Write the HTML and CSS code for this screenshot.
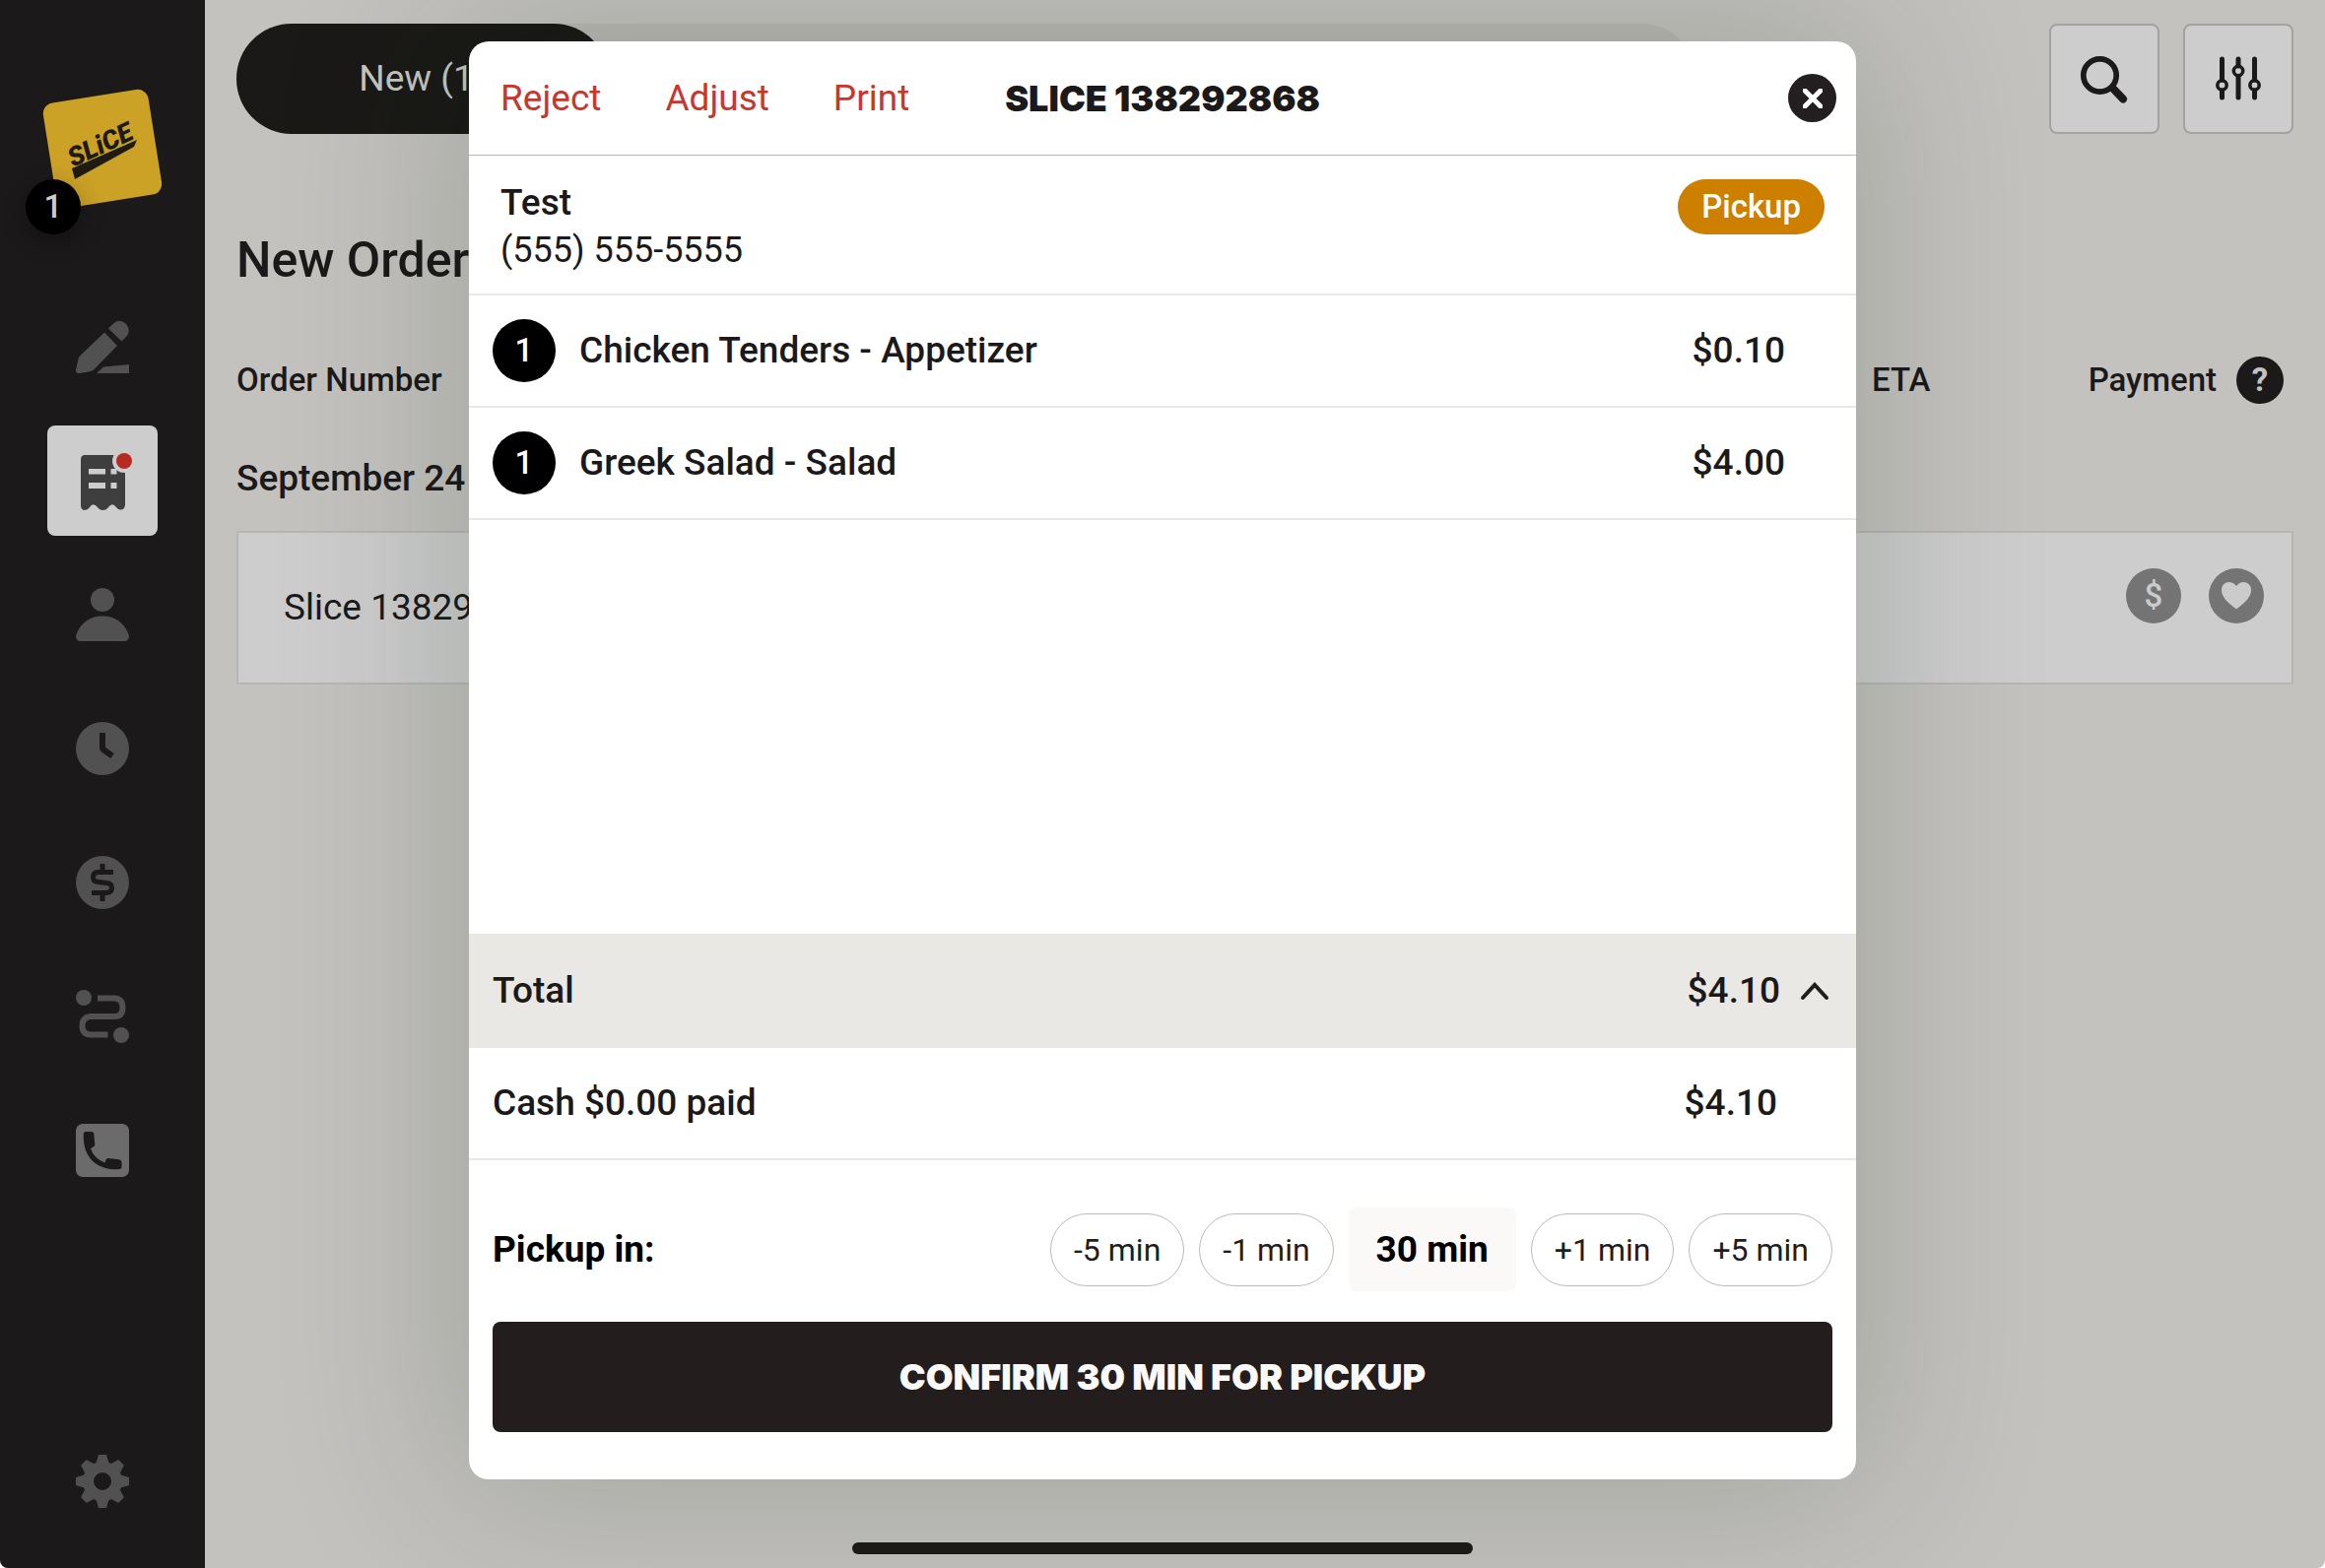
FILE: index.html
```html
<!DOCTYPE html>
<html lang="en">
<head>
    <meta charset="UTF-8">
    <meta name="viewport" content="width=device-width, initial-scale=1.0">
    <title>Slice Orders</title>
    <link rel="stylesheet" href="styles.css">
</head>
<body>
    <div class="app">
        <aside class="sidebar">
            <div class="brand">
                <svg class="logo" viewBox="0 0 124 124" role="img" aria-label="Slice">
                    <rect x="8" y="8" width="108" height="108" rx="11" fill="#cba126" transform="rotate(-9 62 62)"/>
                    <text class="logo-text" x="32" y="81" transform="rotate(-25 32 81)">SLiCE</text>
                    <polygon points="31,82 97,53 94,60 34,93" fill="#1f1a12"/>
                </svg>
                <span class="brand-badge">1</span>
            </div>
            <nav class="nav">
                <button class="nav-item" aria-label="New order">
                    <svg viewBox="0 0 54 54">
                        <path d="M29 12.500 42 26 18 50.500Q16 52 13 52.500L3.500 54Q0 54.500 0 50.500L2.500 39.500Q3 37.500 5 35.500Z"/>
                        <path d="M33 8.500 37.500 4Q44-2 50.500 3.500 57 10.500 51 17L46.500 21.500Z"/>
                        <path d="M28 47.500 54 45V54H21Z"/>
                    </svg>
                </button>
                <button class="nav-item active" aria-label="Orders">
                    <svg viewBox="0 0 54 60">
                        <path fill="#3e3e3e" d="M9 4H45Q50 4 50 9V55Q49 60 45 59.500 43 59.500 41 57 37 51.500 33 57 31 60 27.500 60 24 60 22 57 17.500 51.500 14 57 12 60 8 60 5 59 5 55V9Q5 4 9 4Z"/>
                        <path fill="#cdcdcd" d="M13 18H30V23.500H13ZM35.500 18H41.500V23.500H35.500ZM13 32H30V38H13ZM35.500 32H41.500V38H35.500Z"/>
                        <circle cx="49" cy="10" r="12" fill="#cdcdcd"/>
                        <circle cx="49" cy="10" r="8" fill="#b62a21"/>
                    </svg>
                </button>
                <button class="nav-item" aria-label="Customers">
                    <svg viewBox="0 0 54 54">
                        <circle cx="27" cy="12" r="12"/>
                        <path d="M5 54Q0 54 0 48.500C4 36 14 28.500 27 28.500S50 36 54 48.500Q54 54 49 54Z"/>
                    </svg>
                </button>
                <button class="nav-item" aria-label="Hours">
                    <svg viewBox="0 0 54 54">
                        <circle cx="27" cy="27" r="27"/>
                        <path class="cut" stroke-width="6" d="M27 11V26Q27 27.500 28.500 28.500L37 34.500"/>
                    </svg>
                </button>
                <button class="nav-item" aria-label="Payments">
                    <svg viewBox="0 0 54 54">
                        <circle cx="27" cy="27" r="27"/>
                        <path class="cut" stroke-width="5" d="M38 16.500H23Q17.500 16.500 17.500 21.500T23 26.500L31 27.500Q36.500 28 36.500 32.500T31 37.500H16M27 8V16M27 38V46"/>
                    </svg>
                </button>
                <button class="nav-item" aria-label="Deliveries">
                    <svg viewBox="0 0 54 54">
                        <circle cx="8" cy="8" r="8"/>
                        <circle cx="46" cy="46" r="8"/>
                        <path class="line" stroke-width="6" d="M22 8.500H39.500Q47.500 9 47.500 18T39.500 27H14.500Q6.500 28 6.500 36.500T14.500 45.500H32.500"/>
                    </svg>
                </button>
                <button class="nav-item" aria-label="Calls">
                    <svg viewBox="0 0 54 54">
                        <rect width="54" height="54" rx="7" fill="#6b6b6b"/>
                        <path fill="#1b191a" d="M10 8H16Q18 8 18.300 10L19.300 21Q19.300 22.500 18 23.200L15 25Q18 35 29.500 39.500L30.500 36.500Q31 34.800 33 35L44 36.300Q46.500 36.800 46.500 39V44Q46.500 46 44 46.200C21 47.500 7 34 7.800 11Q7.800 8 10 8Z"/>
                    </svg>
                </button>
            </nav>
            <button class="nav-item" aria-label="Settings">
                <svg viewBox="-27 -27 54 54">
                    <circle r="14.500" fill="none" stroke="#515151" stroke-width="11"/>
                    <path d="M-7-17-4-27H4L7-17ZM-7 17-4 27H4L7 17ZM-17-7-27-4V4L-17 7ZM17-7 27-4V4L17 7Z"/>
                    <path transform="rotate(45)" d="M-7-17-4-27H4L7-17ZM-7 17-4 27H4L7 17ZM-17-7-27-4V4L-17 7ZM17-7 27-4V4L17 7Z"/>
                </svg>
            </button>
        </aside>

        <main class="main">
            <header class="topbar">
                <div class="tabs">
                    <button class="tab">New (1)</button>
                </div>
                <div class="tools">
                    <button class="tool" aria-label="Search">
                        <svg width="50" height="50" viewBox="0 0 50 50" fill="none" stroke="#1b191a" stroke-linecap="round">
                            <circle cx="20.500" cy="21.500" r="16.700" stroke-width="5.700"/>
                            <path d="M34 35 44 45.500" stroke-width="8"/>
                        </svg>
                    </button>
                    <button class="tool" aria-label="Filters">
                        <svg width="50" height="50" viewBox="0 0 50 50" fill="none" stroke="#1b191a" stroke-width="5" stroke-linecap="round">
                            <path d="M8.500 5V26M8.500 37V44M25 5V12M25 23V44M41.500 5V26M41.500 37V44"/>
                            <g stroke-width="3.500">
                                <circle cx="8.500" cy="31.500" r="4.700"/>
                                <circle cx="25" cy="17" r="4.700"/>
                                <circle cx="41.500" cy="31.500" r="4.700"/>
                            </g>
                        </svg>
                    </button>
                </div>
            </header>

            <h1>New Orders</h1>
            <table class="orders">
                <thead>
                    <tr>
                        <th class="col-number">Order Number</th>
                        <th>ETA</th>
                        <th class="col-payment">
                            <span class="payment-head">Payment <button class="help" aria-label="Help">?</button></span>
                        </th>
                    </tr>
                </thead>
                <tbody>
                    <tr>
                        <th class="date" colspan="3">September 24</th>
                    </tr>
                    <tr class="order">
                        <td>Slice 138292868</td>
                        <td></td>
                        <td>
                            <span class="marks">
                                <span class="mark">$</span>
                                <span class="mark">
                                    <svg width="30" height="28" viewBox="0 0 30 28"><path fill="#cbcbcb" d="M15 27.500C5 20 0 14.500 0 8 0 0 10-3 15 4 20-3 30 0 30 8 30 14.500 25 20 15 27.500Z"/></svg>
                                </span>
                            </span>
                        </td>
                    </tr>
                </tbody>
            </table>
        </main>
    </div>

    <div class="overlay">
        <section class="modal" role="dialog" aria-labelledby="order-title">
            <header class="modal-header">
                <div class="actions">
                    <button>Reject</button>
                    <button>Adjust</button>
                    <button>Print</button>
                </div>
                <h2 id="order-title">SLICE 138292868</h2>
                <button class="close" aria-label="Close">
                    <svg width="20" height="20" viewBox="0 0 20 20"><path d="M2 2 18 18M18 2 2 18" stroke="#fff" stroke-width="5" stroke-linecap="round"/></svg>
                </button>
            </header>

            <div class="customer">
                <div>
                    <div class="customer-name">Test</div>
                    <div class="customer-phone">(555) 555-5555</div>
                </div>
                <span class="badge">Pickup</span>
            </div>

            <ul class="items">
                <li class="item"><span class="qty">1</span><span class="item-name">Chicken Tenders - Appetizer</span><span>$0.10</span></li>
                <li class="item"><span class="qty">1</span><span class="item-name">Greek Salad - Salad</span><span>$4.00</span></li>
            </ul>

            <button class="total">
                <span>Total</span>
                <span class="total-value">$4.10
                    <svg width="30" height="20" viewBox="0 0 30 20"><path d="M3 17 15 4 27 17" fill="none" stroke="#1f1d1e" stroke-width="4" stroke-linecap="round"/></svg>
                </span>
            </button>
            <div class="paid"><span>Cash $0.00 paid</span><span>$4.10</span></div>

            <footer class="modal-footer">
                <div class="pickup">
                    <span class="pickup-label">Pickup in:</span>
                    <button class="step">-5 min</button>
                    <button class="step">-1 min</button>
                    <output class="minutes">30 min</output>
                    <button class="step">+1 min</button>
                    <button class="step">+5 min</button>
                </div>
                <button class="confirm">CONFIRM 30 MIN FOR PICKUP</button>
            </footer>
        </section>
        <div class="home-bar"></div>
    </div>
</body>
</html>
```
FILE: styles.css
```css
* {
    box-sizing: border-box;
}
body {
    margin: 0;
    background-color: #fff;
    color: #1b191a;
    font-family: Roboto, "Liberation Sans", sans-serif;
    font-size: 37px;
    line-height: 48px;
}
button {
    padding: 0;
    border: 0;
    background: none;
    color: inherit;
    font: inherit;
}
h1, h2 {
    margin: 0;
}
.app {
    display: flex;
    min-height: 100vh;
    border-radius: 0 0 8px 8px;
    overflow: hidden;
    background-color: #c4c2bf;
}

/* sidebar */
.sidebar {
    position: relative;
    z-index: 2;
    display: flex;
    flex-direction: column;
    align-items: center;
    width: 208px;
    padding-bottom: 32px;
    background-color: #1b191a;
}
.brand {
    position: relative;
    width: 124px;
    height: 296px;
    padding-top: 89px;
}
.logo {
    display: block;
    width: 124px;
    height: 124px;
}
.logo-text {
    fill: #1f1a12;
    font-size: 27px;
    font-style: italic;
    font-weight: 900;
}
.brand-badge {
    position: absolute;
    left: -16px;
    top: 182px;
    width: 56px;
    height: 56px;
    border-radius: 50%;
    background-color: #000;
    color: #ccc;
    font-size: 33px;
    font-weight: 500;
    line-height: 56px;
    text-align: center;
    box-shadow: 0 8px 24px rgba(0, 0, 0, 0.3);
}
.nav {
    display: flex;
    flex: 1;
    flex-direction: column;
    gap: 24px;
}
.nav-item {
    display: flex;
    align-items: center;
    justify-content: center;
    width: 112px;
    height: 112px;
    border-radius: 8px;
}
.nav-item svg {
    width: 54px;
    fill: #515151;
    overflow: visible;
}
.nav-item .cut {
    fill: none;
    stroke: #1b191a;
}
.nav-item .line {
    fill: none;
    stroke: #515151;
}
.nav-item.active {
    background-color: #cdcdcd;
}

/* order list */
.main {
    flex: 1;
    padding: 24px 32px;
}
.topbar {
    display: flex;
    justify-content: space-between;
}
.tabs {
    display: grid;
    grid-template-columns: 378px repeat(3, 1fr);
    width: 71%;
    height: 112px;
    border-radius: 56px;
    background-color: #bab8b5;
}
.tab {
    border-radius: 56px;
    background-color: #1a1917;
    color: #c6c6c4;
}
.tools {
    display: flex;
    gap: 24px;
}
.tool {
    display: flex;
    align-items: center;
    justify-content: center;
    width: 112px;
    height: 112px;
    border: 2px solid #a2a2a1;
    border-radius: 8px;
    background-color: #cdcdcd;
}
h1 {
    margin-top: 96px;
    font-size: 50px;
    font-weight: 500;
    line-height: 64px;
}
.orders {
    width: 100%;
    margin-top: 34px;
    border-spacing: 0;
}
.orders th {
    height: 112px;
    padding: 0;
    font-size: 33px;
    font-weight: 500;
    text-align: left;
}
.orders .col-number {
    width: 1660px;
}
.orders .col-payment {
    padding-right: 10px;
}
.payment-head {
    display: flex;
    align-items: center;
    justify-content: flex-end;
    gap: 20px;
}
.help {
    width: 48px;
    height: 48px;
    border-radius: 50%;
    background-color: #1b191a;
    color: #c4c2bf;
    font-weight: 700;
}
.orders .date {
    height: 97px;
    padding-bottom: 10px;
    font-size: 37px;
}
.order td {
    height: 156px;
    padding: 0;
    border: solid #b6b6b4;
    border-width: 2px 0;
    background-color: #cdcdcd;
}
.order td:first-child {
    padding-left: 46px;
    border-left-width: 2px;
}
.order td:last-child {
    padding: 0 28px 24px 0;
    border-right-width: 2px;
}
.marks {
    display: flex;
    justify-content: flex-end;
    gap: 28px;
}
.mark {
    display: flex;
    align-items: center;
    justify-content: center;
    width: 56px;
    height: 56px;
    border-radius: 50%;
    background-color: #747474;
    color: #cbcbcb;
    font-size: 33px;
    font-weight: 500;
}

/* order dialog */
.overlay {
    position: absolute;
    inset: 0;
    z-index: 1;
    display: flex;
    flex-direction: column;
    align-items: center;
    justify-content: space-between;
    padding: 42px 0 14px;
    overflow: hidden;
}
.modal {
    display: flex;
    flex: 1;
    flex-direction: column;
    width: 1408px;
    margin-bottom: 64px;
    border-radius: 20px;
    background-color: #fff;
    box-shadow: 0 0 180px 20px rgba(10, 34, 16, 0.18);
}
.modal-header {
    display: grid;
    grid-template-columns: 1fr auto 1fr;
    align-items: center;
    height: 116px;
    padding: 0 20px;
    border-bottom: 1px solid #bbb;
}
.actions {
    display: flex;
    gap: 65px;
    padding-left: 12px;
    color: #c8372d;
}
h2 {
    font-family: Inter, sans-serif;
    font-size: 36px;
    font-weight: 900;
}
.close {
    display: flex;
    align-items: center;
    justify-content: center;
    justify-self: end;
    width: 49px;
    height: 49px;
    border-radius: 50%;
    background-color: #231f20;
}
.customer {
    display: flex;
    align-items: flex-start;
    justify-content: space-between;
    height: 142px;
    padding: 24px 32px;
    border-bottom: 2px solid #e8e8e6;
}
.customer-name {
    font-weight: 500;
}
.customer-phone {
    font-size: 36px;
}
.badge {
    padding: 0 24px;
    border-radius: 28px;
    background-color: #cd7f00;
    color: #fff;
    font-size: 33px;
    font-weight: 500;
    line-height: 56px;
}
.items {
    flex: 1;
    margin: 0;
    padding: 0;
    list-style: none;
    font-weight: 500;
}
.item {
    display: flex;
    align-items: center;
    gap: 24px;
    height: 114px;
    padding: 0 72px 0 24px;
    border-bottom: 2px solid #e8e8e6;
}
.item-name {
    flex: 1;
}
.qty {
    width: 64px;
    border-radius: 50%;
    background-color: #000;
    color: #fff;
    font-size: 33px;
    line-height: 64px;
    text-align: center;
}
.total, .paid {
    display: flex;
    align-items: center;
    justify-content: space-between;
    padding: 0 24px;
    font-weight: 500;
}
.total {
    height: 116px;
    padding-right: 27px;
    background-color: #e9e8e4;
}
.total-value {
    display: flex;
    align-items: center;
    gap: 20px;
}
.paid {
    height: 114px;
    padding-right: 80px;
    border-bottom: 2px solid #e8e8e6;
}
.modal-footer {
    padding: 48px 24px;
}
.pickup {
    display: flex;
    align-items: center;
    gap: 15px;
    margin-bottom: 31px;
    color: #000;
}
.pickup-label {
    flex: 1;
    font-weight: 700;
}
.step {
    height: 74px;
    padding: 0 23px;
    border: 1px solid #bbb;
    border-radius: 37px;
    color: #1f1d1e;
    font-size: 32px;
}
.minutes {
    padding: 0 28px;
    border-radius: 8px;
    background-color: #faf9f8;
    font-weight: 700;
    line-height: 85px;
}
.confirm {
    width: 100%;
    height: 112px;
    border-radius: 8px;
    background-color: #231e1d;
    color: #faf9f8;
    font-family: Inter, sans-serif;
    font-size: 36px;
    font-weight: 900;
}
.home-bar {
    width: 630px;
    height: 12px;
    border-radius: 6px;
    background-color: #1a1a18;
}
```
